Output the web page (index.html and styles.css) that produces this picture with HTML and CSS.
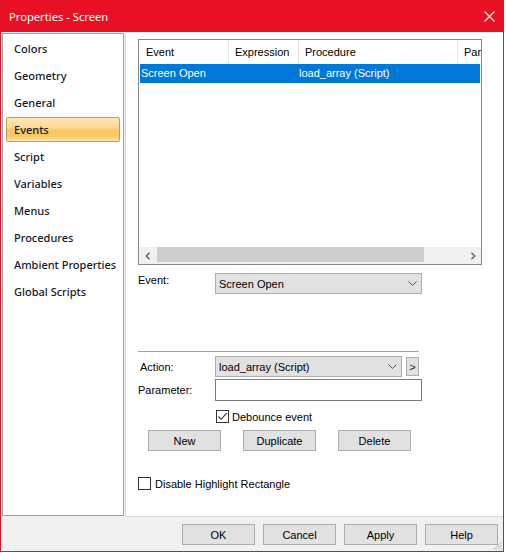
FILE: index.html
```html
<!DOCTYPE html>
<html>
<head>
<meta charset="utf-8">
<link rel="stylesheet" href="styles.css">
</head>
<body>
<div class="window">
  <div class="titlebar">
    <span class="title">Properties - Screen</span>
    <svg class="close" width="11" height="11" viewBox="0 0 11 11"><path d="M0.5 0.5 L10.5 10.5 M10.5 0.5 L0.5 10.5" stroke="#fff" stroke-width="1.1" fill="none"/></svg>
  </div>
  <div class="main">
    <nav class="sidebar">
      <div class="nav-item">Colors</div>
      <div class="nav-item">Geometry</div>
      <div class="nav-item">General</div>
      <div class="nav-item active">Events</div>
      <div class="nav-item">Script</div>
      <div class="nav-item">Variables</div>
      <div class="nav-item">Menus</div>
      <div class="nav-item">Procedures</div>
      <div class="nav-item">Ambient Properties</div>
      <div class="nav-item">Global Scripts</div>
    </nav>
    <section class="panel">
      <div class="grid">
        <div class="grid-head">
          <div class="hcol c1">Event</div>
          <div class="hcol c2">Expression</div>
          <div class="hcol c3">Procedure</div>
          <div class="hcol c4">Par</div>
        </div>
        <div class="grid-row selected">
          <div class="cell c1">Screen Open</div>
          <div class="cell c2"></div>
          <div class="cell c3">load_array (Script)</div>
        </div>
        <div class="grid-fill"></div>
        <div class="hscroll">
          <div class="sb-btn"><svg width="6" height="8" viewBox="0 0 6 8"><path d="M4.5 0.8 L1.3 4 L4.5 7.2" stroke="#606060" stroke-width="1.4" fill="none"/></svg></div>
          <div class="sb-track"><div class="sb-thumb"></div></div>
          <div class="sb-btn"><svg width="6" height="8" viewBox="0 0 6 8"><path d="M1.5 0.8 L4.7 4 L1.5 7.2" stroke="#606060" stroke-width="1.4" fill="none"/></svg></div>
        </div>
      </div>

      <div class="form-row event-row">
        <label class="lbl lbl-event">Event:</label>
        <div class="select wide">
          <span>Screen Open</span>
          <svg class="chev" width="9" height="5" viewBox="0 0 9 5"><path d="M0.5 0.5 L4.5 4.5 L8.5 0.5" stroke="#555" stroke-width="1" fill="none"/></svg>
        </div>
      </div>

      <div class="separator"></div>

      <div class="form-row action-row">
        <label class="lbl lbl-action">Action:</label>
        <div class="select narrow">
          <span>load_array (Script)</span>
          <svg class="chev" width="9" height="5" viewBox="0 0 9 5"><path d="M0.5 0.5 L4.5 4.5 L8.5 0.5" stroke="#555" stroke-width="1" fill="none"/></svg>
        </div>
        <div class="mini-btn">&gt;</div>
      </div>

      <div class="form-row param-row">
        <label class="lbl">Parameter:</label>
        <div class="textbox"></div>
      </div>

      <div class="check-row debounce">
        <span class="checkbox checked"><svg width="11" height="11" viewBox="0 0 11 11"><path d="M1.5 5.5 L4.2 8.3 L9.6 2.2" stroke="#333" stroke-width="1.1" fill="none"/></svg></span>
        <span class="check-label">Debounce event</span>
      </div>

      <div class="btn-row">
        <div class="btn">New</div>
        <div class="btn">Duplicate</div>
        <div class="btn">Delete</div>
      </div>

      <div class="check-row disable">
        <span class="checkbox"></span>
        <span class="check-label">Disable Highlight Rectangle</span>
      </div>
    </section>
  </div>
  <div class="footer">
    <div class="btn">OK</div>
    <div class="btn">Cancel</div>
    <div class="btn">Apply</div>
    <div class="btn">Help</div>
    <svg class="grip" width="9" height="9" viewBox="0 0 9 9"><path d="M8.5 1 L1 8.5 M8.5 4 L4 8.5 M8.5 7 L7 8.5" stroke="#a8a8a8" stroke-width="1" fill="none"/></svg>
  </div>
</div>
</body>
</html>
```
FILE: styles.css
```css
* { box-sizing: border-box; }
html, body { margin: 0; padding: 0; background: #ffffff; }
body {
  font-family: "Liberation Sans", Arial, sans-serif;
  font-size: 11px;
  color: #000;
}
.window {
  width: 504px;
  height: 552px;
  border: 1px solid #e81123;
  border-top: 0;
  background: #f0f0f0;
  display: flex;
  flex-direction: column;
}
.titlebar {
  height: 32px;
  flex: none;
  background: #e81123;
  display: flex;
  align-items: center;
  padding-left: 8px;
  padding-right: 8px;
}
.title {
  font-family: "Noto Sans", "Open Sans", sans-serif;
  font-size: 11.2px;
  color: #fff;
  margin-top: 1px;
}
.close { margin-left: auto; display: block; }

.main {
  height: 485px;
  flex: none;
  display: flex;
  padding-top: 1px;
}
.sidebar {
  width: 122px;
  height: 483px;
  margin-left: 1px;
  margin-right: 1px;
  border: 1px solid #a0a0a0;
  background: #fff;
  padding-top: 2px;
  padding-left: 3px;
  display: flex;
  flex-direction: column;
}
.nav-item {
  height: 25px;
  margin-bottom: 2px;
  width: 114px;
  line-height: 23px;
  padding-left: 7px;
  border: 1px solid transparent;
  font-family: "Noto Sans", "Open Sans", sans-serif;
  font-size: 11px;
  font-weight: 500;
  color: #111a28;
  white-space: nowrap;
}
.nav-item.active {
  border: 1px solid #c09c5c;
  border-radius: 2px;
  background: linear-gradient(#fee6b8 0%, #fdd898 40%, #fcc764 55%, #fbc763 78%, #fde3a2 100%);
}

.panel {
  width: 378px;
  height: 484px;
  background: #fff;
  border-left: 1px solid #dcdcdc;
  border-bottom: 1px solid #dcdcdc;
  padding: 6px 0 0 12px;
  display: flex;
  flex-direction: column;
}
.grid {
  width: 344px;
  height: 226px;
  flex: none;
  border: 1px solid #828790;
  display: flex;
  flex-direction: column;
  overflow: hidden;
}
.grid-head {
  height: 24px;
  display: flex;
  flex: none;
}
.hcol {
  height: 24px;
  line-height: 25px;
  padding-left: 6px;
  border-right: 1px solid #e5e5e5;
  white-space: nowrap;
  overflow: hidden;
  color: #000;
}
.grid-head .c1 { width: 90px; padding-left: 7px; }
.grid-head .c2 { width: 70px; }
.grid-head .c3 { width: 159px; }
.grid-head .c4 { flex: 1; border-right: 0; }
.grid-row {
  height: 19px;
  flex: none;
  display: flex;
  margin: 0 1px;
}
.grid-row.selected { background: #0078d7; color: #fff; }
.cell { line-height: 19px; white-space: nowrap; }
.grid-row .c1 { width: 89px; padding-left: 1px; }
.grid-row .c2 { width: 70px; }
.grid-row .c3 { flex: 1; }
.grid-fill { flex: 1; }
.hscroll {
  height: 17px;
  flex: none;
  display: flex;
  background: #f0f0f0;
}
.sb-btn {
  width: 17px;
  display: flex;
  align-items: center;
  justify-content: center;
}
.sb-track { flex: 1; padding: 0 0 2px 1px; }
.sb-thumb { width: 267px; height: 15px; background: #cdcdcd; }

.form-row { display: flex; flex: none; }
.lbl { width: 77px; flex: none; white-space: nowrap; }
.event-row { margin-top: 8px; height: 21px; }
.lbl-event { padding-top: 1px; line-height: 13px; }
.select {
  height: 21px;
  background: #e1e1e1;
  border: 1px solid #adadad;
  display: flex;
  align-items: center;
  padding-left: 3px;
  padding-right: 4px;
}
.select span { flex: 1; }
.select.wide { width: 207px; }
.select.narrow { width: 187px; }
.chev { display: block; }
.separator {
  margin-top: 57px;
  width: 281px;
  height: 1px;
  flex: none;
  background: #a0a0a0;
}
.action-row { margin-top: 4px; height: 21px; align-items: center; }
.lbl-action { padding-left: 2px; }
.mini-btn {
  width: 13px;
  height: 19px;
  margin-left: 4px;
  background: #e1e1e1;
  border: 1px solid #adadad;
  display: flex;
  align-items: center;
  justify-content: center;
  font-size: 11px;
  color: #222;
}
.param-row { margin-top: 2px; height: 22px; align-items: center; }
.textbox {
  width: 207px;
  height: 22px;
  background: #fff;
  border: 1px solid #7a7a7a;
}
.check-row { display: flex; align-items: center; flex: none; height: 13px; }
.debounce { margin-top: 9px; margin-left: 78px; }
.disable { margin-top: 26px; }
.checkbox {
  width: 13px;
  height: 13px;
  border: 1px solid #333;
  background: #fff;
  display: flex;
  align-items: center;
  justify-content: center;
  flex: none;
}
.checkbox svg { display: block; }
.debounce .check-label { margin-left: 3px; }
.disable .check-label { margin-left: 4px; }
.btn-row {
  display: flex;
  flex: none;
  gap: 22px;
  margin-top: 7px;
  margin-left: 10px;
}
.btn {
  width: 73px;
  height: 21px;
  flex: none;
  background: #e1e1e1;
  border: 1px solid #adadad;
  display: flex;
  align-items: center;
  justify-content: center;
  color: #000;
}
.footer {
  height: 34px;
  flex: none;
  display: flex;
  justify-content: flex-end;
  gap: 8px;
  padding-top: 7px;
  padding-right: 5px;
  position: relative;
}
.grip { position: absolute; right: 1px; bottom: 1px; }
```
